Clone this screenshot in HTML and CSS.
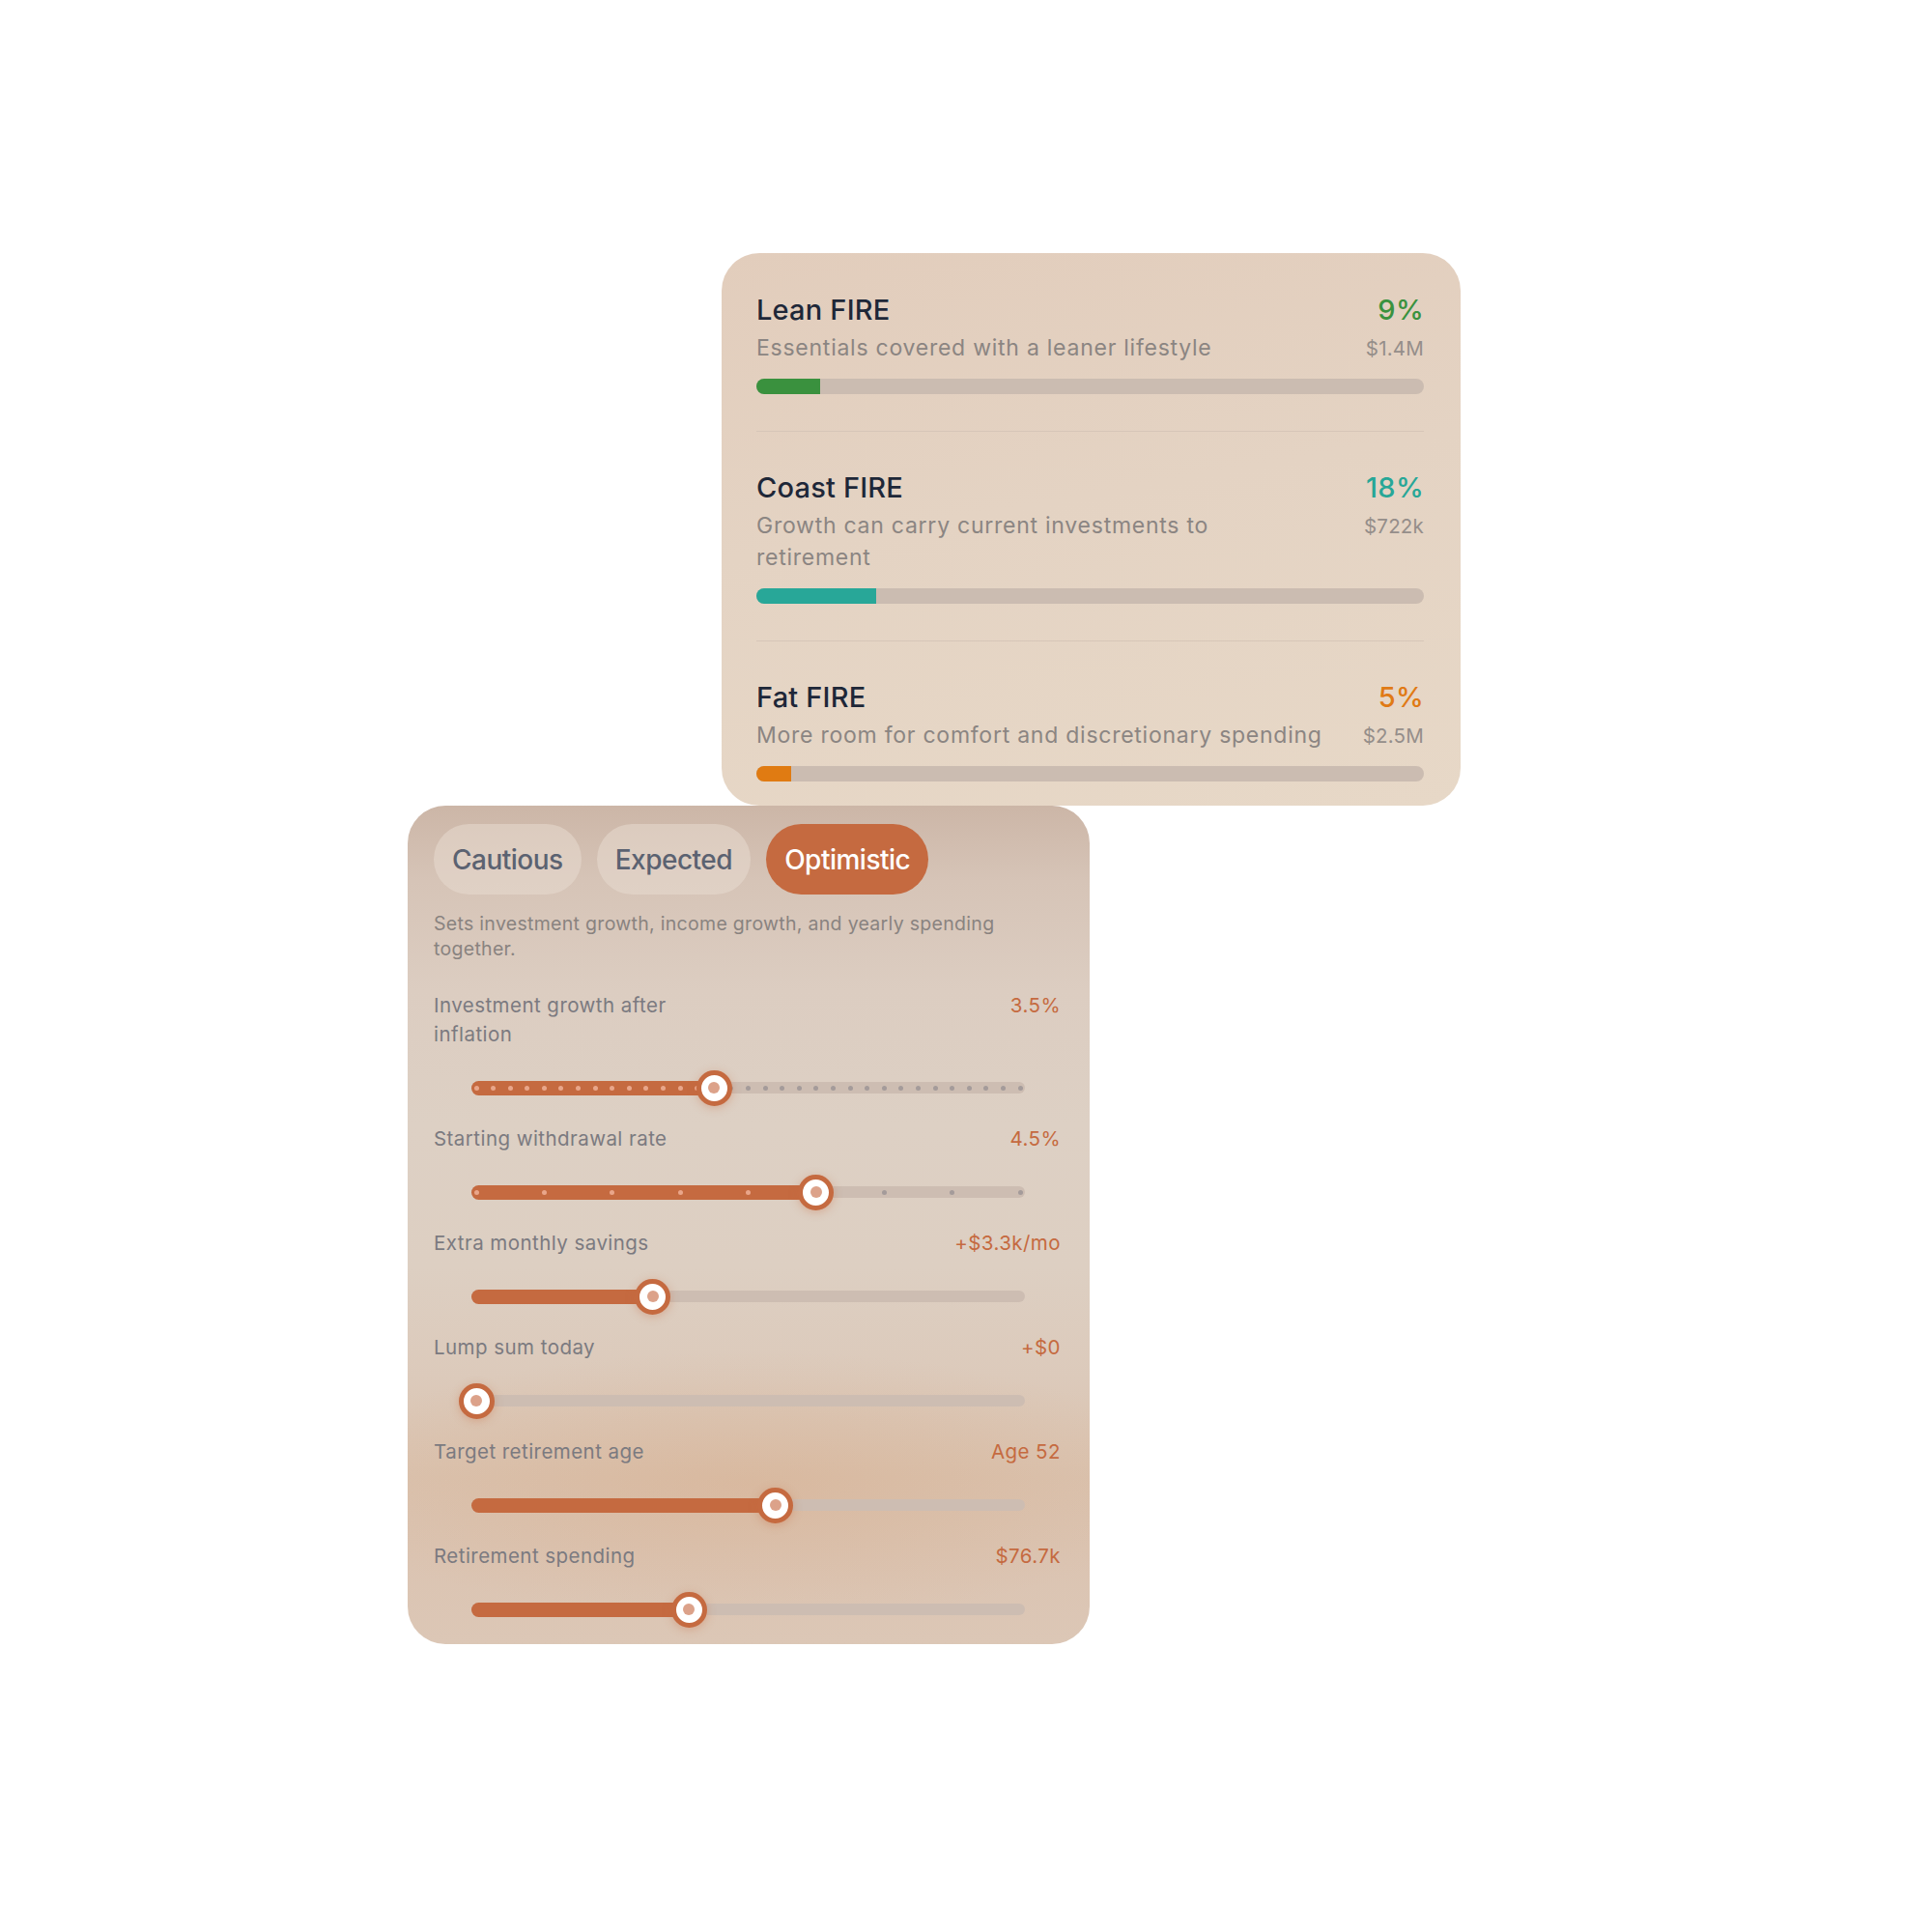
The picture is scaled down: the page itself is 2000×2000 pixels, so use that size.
FILE: index.html
```html
<!DOCTYPE html>
<html lang="en">
<head>
<meta charset="utf-8">
<title>FIRE planner</title>
<link rel="stylesheet" href="styles.css">
</head>
<body>
<div class="stage">
  <section class="card goals">
    <div class="goal">
      <div class="goal-head">
        <div class="goal-text">
          <div class="goal-title">Lean FIRE</div>
          <div class="goal-desc">Essentials covered with a leaner lifestyle</div>
        </div>
        <div class="goal-nums">
          <div class="goal-pct pct-green">9%</div>
          <div class="goal-amt">$1.4M</div>
        </div>
      </div>
      <div class="bar"><div class="bar-fill fill-green" style="width:9.5%"></div></div>
    </div>
    <div class="goal">
      <div class="goal-head">
        <div class="goal-text">
          <div class="goal-title">Coast FIRE</div>
          <div class="goal-desc">Growth can carry current investments to retirement</div>
        </div>
        <div class="goal-nums">
          <div class="goal-pct pct-teal">18%</div>
          <div class="goal-amt">$722k</div>
        </div>
      </div>
      <div class="bar"><div class="bar-fill fill-teal" style="width:17.9%"></div></div>
    </div>
    <div class="goal">
      <div class="goal-head">
        <div class="goal-text">
          <div class="goal-title">Fat FIRE</div>
          <div class="goal-desc">More room for comfort and discretionary spending</div>
        </div>
        <div class="goal-nums">
          <div class="goal-pct pct-orange">5%</div>
          <div class="goal-amt">$2.5M</div>
        </div>
      </div>
      <div class="bar"><div class="bar-fill fill-orange" style="width:5.2%"></div></div>
    </div>
  </section>

  <section class="card controls">
    <div class="tabs">
      <div class="tab">Cautious</div>
      <div class="tab">Expected</div>
      <div class="tab tab-active">Optimistic</div>
    </div>
    <p class="scenario-note">Sets investment growth, income growth, and yearly spending together.</p>

    <div class="control-list">
      <div class="control">
        <div class="control-head">
          <span class="control-label">Investment growth after inflation</span>
          <span class="control-value">3.5%</span>
        </div>
        <div class="slider">
          <div class="track" style="--t:0.4375">
            <div class="fill"></div>
            <div class="dots">
              <i class="dot on"></i><i class="dot on"></i><i class="dot on"></i><i class="dot on"></i><i class="dot on"></i><i class="dot on"></i><i class="dot on"></i><i class="dot on"></i><i class="dot on"></i><i class="dot on"></i><i class="dot on"></i><i class="dot on"></i><i class="dot on"></i><i class="dot on"></i><i class="dot on"></i><i class="dot"></i><i class="dot"></i><i class="dot"></i><i class="dot"></i><i class="dot"></i><i class="dot"></i><i class="dot"></i><i class="dot"></i><i class="dot"></i><i class="dot"></i><i class="dot"></i><i class="dot"></i><i class="dot"></i><i class="dot"></i><i class="dot"></i><i class="dot"></i><i class="dot"></i><i class="dot"></i>
            </div>
            <div class="thumb"></div>
          </div>
        </div>
      </div>

      <div class="control">
        <div class="control-head">
          <span class="control-label">Starting withdrawal rate</span>
          <span class="control-value">4.5%</span>
        </div>
        <div class="slider">
          <div class="track" style="--t:0.625">
            <div class="fill"></div>
            <div class="dots">
              <i class="dot on"></i><i class="dot on"></i><i class="dot on"></i><i class="dot on"></i><i class="dot on"></i><i class="dot on"></i><i class="dot"></i><i class="dot"></i><i class="dot"></i>
            </div>
            <div class="thumb"></div>
          </div>
        </div>
      </div>

      <div class="control">
        <div class="control-head">
          <span class="control-label">Extra monthly savings</span>
          <span class="control-value">+$3.3k/mo</span>
        </div>
        <div class="slider">
          <div class="track" style="--t:0.325">
            <div class="fill"></div>
            <div class="thumb"></div>
          </div>
        </div>
      </div>

      <div class="control">
        <div class="control-head">
          <span class="control-label">Lump sum today</span>
          <span class="control-value">+$0</span>
        </div>
        <div class="slider">
          <div class="track" style="--t:0">
            <div class="thumb"></div>
          </div>
        </div>
      </div>

      <div class="control">
        <div class="control-head">
          <span class="control-label">Target retirement age</span>
          <span class="control-value">Age 52</span>
        </div>
        <div class="slider">
          <div class="track" style="--t:0.5506">
            <div class="fill"></div>
            <div class="thumb"></div>
          </div>
        </div>
      </div>

      <div class="control">
        <div class="control-head">
          <span class="control-label">Retirement spending</span>
          <span class="control-value">$76.7k</span>
        </div>
        <div class="slider">
          <div class="track" style="--t:0.3908">
            <div class="fill"></div>
            <div class="thumb"></div>
          </div>
        </div>
      </div>
    </div>
  </section>
</div>
</body>
</html>
```

FILE: styles.css
```css
* { box-sizing: border-box; }

html, body {
  margin: 0;
  background: #ffffff;
}

body {
  font-family: Inter, "Noto Sans", "Liberation Sans", sans-serif;
  -webkit-font-smoothing: antialiased;
}

.stage {
  padding-top: 262px;
  min-height: 2000px;
}

.card {
  border-radius: 39px;
}

/* ---------- Goals card ---------- */
.goals {
  margin-left: 747px;
  width: 765px;
  padding: 0 38px 25px 36px;
  background: linear-gradient(170deg, #e2cdbc 0%, #e4d3c3 45%, #e7d8c7 100%);
}

.goal {
  padding: 40px 0 38px;
  border-top: 1px solid #d7c6b8;
}

.goal:first-child {
  border-top: none;
  padding-top: 41px;
}

.goal:last-child {
  padding-bottom: 0;
}

.goal-head {
  display: flex;
  justify-content: space-between;
  gap: 20px;
}

.goal-text {
  flex: 0 1 592px;
  min-width: 0;
}

.goal-title {
  font-size: 29px;
  line-height: 35px;
  font-weight: 500;
  color: #1e2738;
  letter-spacing: 0.2px;
}

.goal-desc {
  margin-top: 6px;
  font-size: 23px;
  line-height: 33px;
  color: #8b8582;
  letter-spacing: 0.75px;
}

.goal-nums {
  text-align: right;
  flex: none;
}

.goal-pct {
  font-size: 29px;
  line-height: 35px;
  font-weight: 500;
  letter-spacing: 0.3px;
}

.goal-amt {
  margin-top: 6px;
  font-size: 20.5px;
  line-height: 33px;
  color: #958e8a;
  letter-spacing: 0.2px;
}

.pct-green { color: #3a923e; }
.pct-teal { color: #27a797; }
.pct-orange { color: #e07a15; }

.bar {
  margin-top: 15px;
  height: 16px;
  border-radius: 8px;
  background: #cbbcb1;
  overflow: hidden;
}

.bar-fill {
  height: 100%;
}

.fill-green { background: #3a913e; }
.fill-teal { background: #28a798; }
.fill-orange { background: #e07b12; }

/* ---------- Controls card ---------- */
.controls {
  margin-left: 422px;
  width: 706px;
  padding: 19px 30px 0 27px;
  background:
    radial-gradient(ellipse 65% 16% at 50% 81%, rgba(214, 168, 132, 0.35), rgba(214, 168, 132, 0) 100%),
    linear-gradient(180deg, #ccb6a7 0%, #d6c4b7 9%, #dccdc1 22%, #ddd0c4 38%, #ddcfc2 55%, #dccabb 68%, #dac2ae 80%, #dbc4b2 90%, #dcc7b6 100%);
}

.tabs {
  display: flex;
  gap: 16px;
}

.tab {
  height: 73px;
  padding: 0 19px;
  border-radius: 37px;
  display: flex;
  align-items: center;
  font-size: 28px;
  font-weight: 500;
  color: #5b6271;
  background: rgba(232, 218, 208, 0.55);
  letter-spacing: -0.5px;
}

.tab-active {
  background: #c56a40;
  color: #ffffff;
}

.scenario-note {
  margin: 17px 0 0;
  font-size: 19.5px;
  line-height: 26px;
  color: #898380;
  letter-spacing: 0.3px;
  padding-right: 40px;
}

.control-list {
  margin-top: 31px;
  display: flex;
  flex-direction: column;
  gap: 2px;
}

.control-head {
  display: flex;
  justify-content: space-between;
  align-items: flex-start;
  font-size: 20.5px;
  line-height: 30px;
  letter-spacing: 0.45px;
}

.control-label {
  max-width: 262px;
  color: #7b7a80;
}

.control-value {
  color: #c56a40;
}

.slider {
  margin-top: 4px;
  height: 72px;
  padding: 0 37px 0 39px;
  display: flex;
  align-items: center;
}

.track {
  position: relative;
  flex: 1;
  height: 12px;
  border-radius: 6px;
  background: #cdbdb2;
}

.fill {
  position: absolute;
  left: 0;
  top: -1.5px;
  height: 15px;
  border-radius: 8px 0 0 8px;
  width: calc(5px + (100% - 10px) * var(--t));
  background: #c56a40;
}

.dots {
  position: absolute;
  inset: 0;
  padding: 0 2.5px;
  display: flex;
  justify-content: space-between;
  align-items: center;
}

.dot {
  display: block;
  width: 5px;
  height: 5px;
  border-radius: 50%;
  background: #a49b9a;
}

.dot.on {
  background: #e9a68a;
}

.thumb {
  position: absolute;
  top: 50%;
  left: calc(5px + (100% - 10px) * var(--t));
  width: 37px;
  height: 37px;
  margin: -18.5px 0 0 -18.5px;
  border-radius: 50%;
  background: #ffffff;
  border: 5.5px solid #c56a40;
  box-shadow: 0 2px 10px rgba(197, 106, 64, 0.35);
  display: flex;
  align-items: center;
  justify-content: center;
}

.thumb::after {
  content: "";
  width: 12px;
  height: 12px;
  border-radius: 50%;
  background: #dca28a;
}
```
